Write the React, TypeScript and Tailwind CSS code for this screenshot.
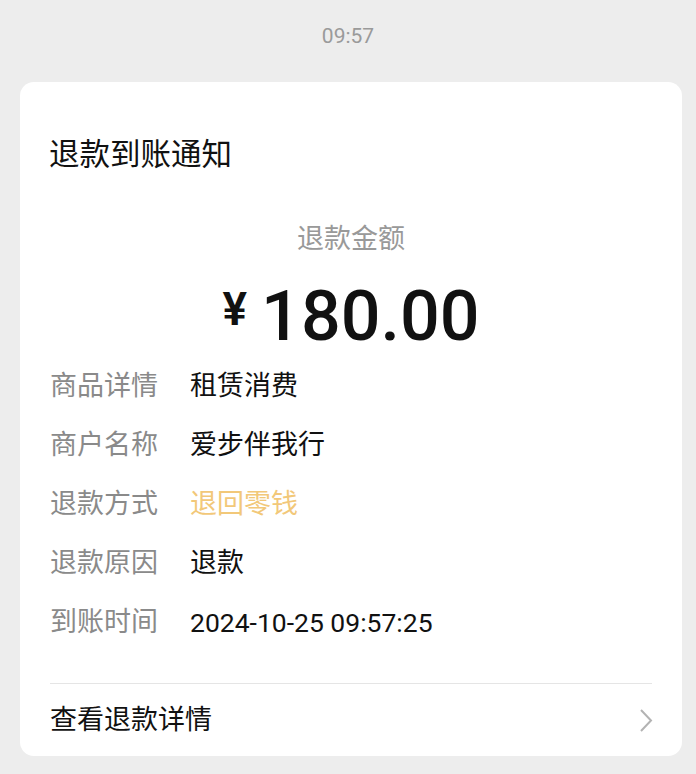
export default function App() {
  const rows: { label: string; value: string; yellow?: boolean; mono?: boolean }[] = [
    { label: "商品详情", value: "租赁消费" },
    { label: "商户名称", value: "爱步伴我行" },
    { label: "退款方式", value: "退回零钱", yellow: true },
    { label: "退款原因", value: "退款" },
    { label: "到账时间", value: "2024-10-25 09:57:25", mono: true },
  ];
  return (
    <div
      className="w-[696px] h-[774px] bg-[#ededed] overflow-hidden"
      style={{ fontFamily: 'Roboto, "Noto Sans CJK SC", sans-serif' }}
    >
      <div className="pt-[24px] text-center text-[21px] leading-[24px] text-[#9a9a9a]">09:57</div>
      <div className="mt-[34px] ml-[20px] w-[662px] bg-white rounded-[14px] px-[30px]">
        <div className="pt-[53px] text-[30.5px] leading-[40px] text-[#111] -ml-[1px]">退款到账通知</div>
        <div className="mt-[44px] text-center text-[27px] leading-[40px] text-[#999]">退款金额</div>
        <div className="mt-[22px] text-center leading-none text-[#111] font-medium">
          <span className="text-[46px] font-semibold align-[15px] mr-[14px]">¥</span>
          <span className="text-[70px]">180.00</span>
        </div>
        <div className="mt-[6px] flex flex-col">
          {rows.map((r) => (
            <div key={r.label} className="flex items-center h-[59px]">
              <div className="w-[140px] text-[27px] text-[#8a8a8a]">{r.label}</div>
              <div
                className={
                  r.mono
                    ? "text-[26.5px] text-[#111]"
                    : r.yellow
                    ? "text-[27px] text-[#f2c879]"
                    : "text-[27px] text-[#111]"
                }
              >
                {r.value}
              </div>
            </div>
          ))}
        </div>
        <div className="mt-[31px] h-px bg-[#e5e5e5]"></div>
        <div className="h-[72px] flex items-center justify-between">
          <div className="text-[27px] text-[#111]">查看退款详情</div>
          <svg width="14" height="25" viewBox="0 0 14 25" className="mr-[-1px]">
            <path d="M2 2 L12 12.5 L2 23" fill="none" stroke="#b3b3b3" strokeWidth="2" />
          </svg>
        </div>
      </div>
    </div>
  );
}
